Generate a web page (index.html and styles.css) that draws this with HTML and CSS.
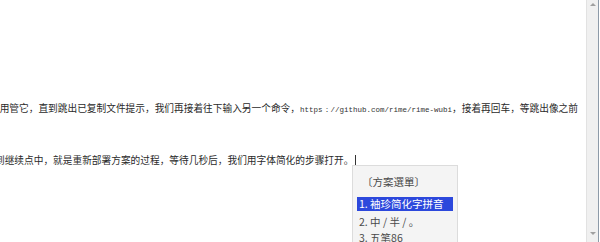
FILE: index.html
```html
<!DOCTYPE html>
<html lang="zh">
<head>
<meta charset="utf-8">
<link rel="stylesheet" href="styles.css">
</head>
<body>
<div class="window">
  <div class="editor">
    <p class="line line-first">不用管它，直到跳出已复制文件提示，我们再接着往下输入另一个命令，<span class="mono">https：//github.com/rime/rime-wubi</span>，接着再回车，等跳出像之前</p>
    <p class="line line-second">到继续点中，就是重新部署方案的过程，等待几秒后，我们用字体简化的步骤打开。<span class="caret"></span></p>
    <div class="menu">
      <div class="menu-title">〔方案選單〕</div>
      <div class="menu-item active">1. 袖珍简化字拼音</div>
      <div class="menu-item">2. 中 / 半 / 。</div>
      <div class="menu-item">3. 五笔86</div>
    </div>
  </div>
  <div class="scrollbar">
    <span class="arrow up"></span>
    <span class="arrow down"></span>
  </div>
</div>
</body>
</html>
```
FILE: styles.css
```css
html, body {
  margin: 0;
  padding: 0;
  background: #ffffff;
}
.window {
  display: flex;
  width: 600px;
  height: 242px;
  overflow: hidden;
}
.editor {
  position: relative;
  flex: 1;
  padding-top: 100px;
  font-family: "Noto Sans CJK SC", "DejaVu Sans", sans-serif;
  font-size: 9.7px;
  color: #2a2a2a;
  overflow: hidden;
}
.line {
  margin: 0;
  line-height: 16px;
  white-space: nowrap;
}
.line-first {
  text-indent: -10px;
}
.line-second {
  margin-top: 34px;
  text-indent: -5px;
}
.mono {
  font-family: "Liberation Mono", monospace;
  font-size: 7.5px;
  color: #333;
}
.caret {
  display: inline-block;
  width: 1px;
  height: 11px;
  background: #333;
  margin-left: 2px;
  vertical-align: -2px;
}
.menu {
  position: absolute;
  left: 352px;
  top: 165px;
  width: 106px;
  height: 90px;
  background: #f4f4f4;
  border: 1px solid #dcdcdc;
  padding: 8px 4px 0 4px;
  box-sizing: border-box;
  font-size: 10.5px;
  color: #4a4a4a;
}
.menu-title {
  line-height: 16px;
  padding-left: 5px;
  margin-bottom: 7px;
}
.menu-item {
  line-height: 16px;
  padding-left: 2px;
}
.menu-item.active {
  background: #2c48dc;
  color: #ffffff;
  line-height: 14px;
  margin-bottom: 3px;
}
.scrollbar {
  position: relative;
  width: 11px;
  margin-right: 1px;
  background: #f0f0f0;
  border-left: 1px solid #e2e2e2;
  border-right: 1px solid #8d9aa8;
  display: flex;
  flex-direction: column;
  justify-content: space-between;
  align-items: center;
  padding: 3px 0 7px;
}
.arrow {
  width: 0;
  height: 0;
  border-left: 3px solid transparent;
  border-right: 3px solid transparent;
}
.arrow.up {
  border-bottom: 3px solid #a0a0a0;
}
.arrow.down {
  border-top: 3px solid #a0a0a0;
}
```
